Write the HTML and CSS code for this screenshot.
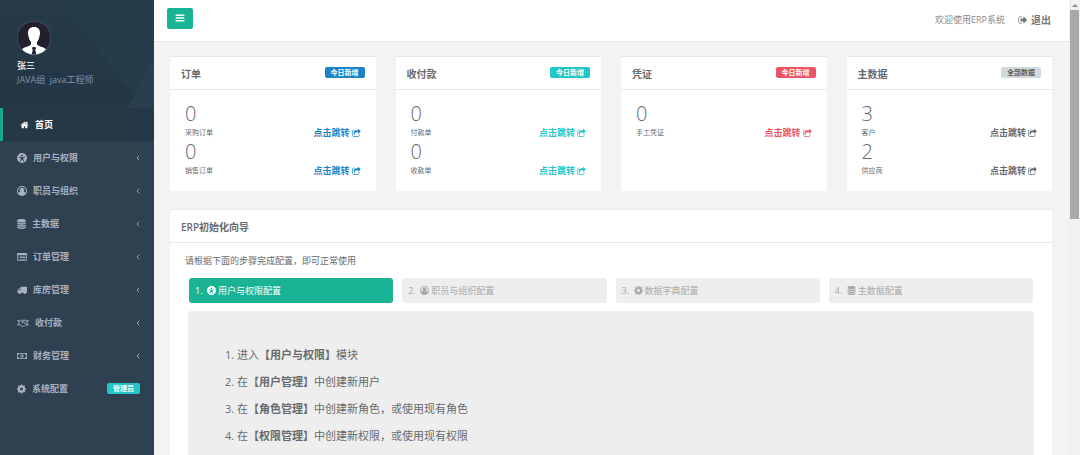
FILE: index.html
```html
<!DOCTYPE html>
<html lang="zh-CN">
<head>
<meta charset="utf-8">
<title>ERP系统</title>
<link rel="stylesheet" href="styles.css">
</head>
<body>
<svg class="sprite" aria-hidden="true">
  <symbol id="bars" viewBox="0 0 16 16"><path d="M1 2.5h14v2.4H1zM1 6.9h14v2.4H1zM1 11.3h14v2.4H1z"/></symbol>
  <symbol id="home" viewBox="0 0 1792 1792"><path d="M1472 992v480q0 26-19 45t-45 19h-384v-384h-256v384h-384q-26 0-45-19t-19-45v-480q0-1 .5-3t.5-3l575-474 575 474q1 2 1 6zm223-69l-62 74q-8 9-21 11h-3q-13 0-21-7l-692-577-692 577q-12 8-24 7-13-2-21-11l-62-74q-8-10-7-23.5t11-21.5l719-599q32-26 76-26t76 26l244 204v-195q0-14 9-23t23-9h192q14 0 23 9t9 23v408l219 182q10 8 11 21.5t-7 23.5z"/></symbol>
  <symbol id="access" viewBox="0 0 16 16"><path fill-rule="evenodd" d="M8 0a8 8 0 1 0 0 16A8 8 0 0 0 8 0zM8 2.6a1.5 1.5 0 1 1 0 3 1.5 1.5 0 0 1 0-3zM3.4 5.6l3 1h3.2l3-1 .3 1-2.9 1.3v2l1.5 3.6-1.1.5L8.5 10.600h-1L5.600 14l-1.100-.5L6 9.900v-2L3.100 6.600z"/></symbol>
  <symbol id="user" viewBox="0 0 16 16"><path fill-rule="evenodd" d="M8 0a8 8 0 1 0 0 16A8 8 0 0 0 8 0zm0 1.500a6.500 6.500 0 0 1 5.600 9.800c-.5-1.300-1.400-2.100-2.700-2.200a3.800 3.800 0 1 0-5.800 0c-1.300.1-2.200.9-2.700 2.200A6.500 6.500 0 0 1 8 1.500z"/></symbol>
  <symbol id="database" viewBox="0 0 14 16"><path d="M7 0c3.900 0 7 1 7 2.300v1.200c0 1.200-3.100 2.200-7 2.200S0 4.700 0 3.500V2.300C0 1 3.100 0 7 0zM0 5.200c1.500 1 4.100 1.500 7 1.500s5.500-.5 7-1.500v1.700c0 1.200-3.100 2.200-7 2.200S0 8.100 0 6.900zM0 8.600c1.500 1 4.100 1.500 7 1.500s5.500-.5 7-1.500v1.700c0 1.200-3.100 2.200-7 2.200s-7-1-7-2.200zM0 12c1.500 1 4.100 1.500 7 1.500s5.500-.5 7-1.500v1.700C14 15 10.900 16 7 16s-7-1-7-2.300z"/></symbol>
  <symbol id="list" viewBox="0 0 18 16"><path fill-rule="evenodd" d="M1.500 1h15A1.500 1.500 0 0 1 18 2.500v11a1.500 1.500 0 0 1-1.500 1.500h-15A1.500 1.500 0 0 1 0 13.500v-11A1.500 1.500 0 0 1 1.500 1zM1.300 5v8.700h15.400V5zM2.500 6h1.700v1.300H2.500zM5.400 6h10v1.300h-10zM2.500 8.600h1.700v1.300H2.500zM5.400 8.600h10v1.300h-10zM2.500 11.200h1.700v1.300H2.500zM5.400 11.200h10v1.300h-10z"/></symbol>
  <symbol id="truck" viewBox="0 0 18 16"><path fill-rule="evenodd" d="M7 2h10.300q.7 0 .7.700v9.600q0 .700-1.600.700a2.300 2.300 0 0 1-4.600 0H7.400a2.300 2.300 0 0 1-4.600 0H1q-1 0-1-.7.900-.3.900-.9V8.200q0-.4.300-.7L3.900 4.800q.4-.4 1-.4H6.400V2.700Q6.400 2 7 2zM2.300 8.500h4.100V5.700H4.900z"/></symbol>
  <symbol id="handshake" viewBox="0 0 22 16"><path fill="none" stroke="currentColor" stroke-width="1.700" stroke-linejoin="round" stroke-linecap="round" d="M1 4h2.500v7.500H1M21 4h-2.500v7.500H21M3.500 4.500L7 2.800h3l1.500.8M3.500 11h1.500l4.500 3.300q1.500.7 2.500-.3l1.500-.2 1.200-1.300 1.300-.3.900-1.200h1.600M18.500 4.500L15 2.800h-2.500L8.300 6.400q.8 1.500 2.700.6l1.500-1.100 4.200 4.800"/></symbol>
  <symbol id="money" viewBox="0 0 20 16"><path fill-rule="evenodd" d="M0 2h20v12H0zM4 3.400A2.600 2.600 0 0 1 1.400 6v4A2.600 2.600 0 0 1 4 12.600h12a2.600 2.600 0 0 1 2.600-2.600V6A2.600 2.600 0 0 1 16 3.400zM10 4.300c1.800 0 3 1.600 3 3.700s-1.200 3.700-3 3.700S7 10.100 7 8s1.200-3.700 3-3.700zM9.600 5.800L8.300 7l.6.700.6-.4v2H8.500v.9h3v-.9h-1V5.800z"/></symbol>
  <symbol id="cog" viewBox="128 128 1536 1536"><path d="M1152 896q0-106-75-181t-181-75-181 75-75 181 75 181 181 75 181-75 75-181zm512-109v222q0 12-8 23t-20 13l-185 28q-19 54-39 91 35 50 107 138 10 12 10 25t-9 23q-27 37-99 108t-94 71q-12 0-26-9l-138-108q-44 23-91 38-16 136-29 186-7 28-36 28h-222q-14 0-24.500-8.500t-11.500-21.500l-28-184q-49-16-90-37l-141 107q-10 9-25 9-14 0-25-11-126-114-165-168-7-10-7-23 0-12 8-23 15-21 51-66.500t54-70.500q-27-50-41-99l-183-27q-13-2-21-12.500t-8-23.500v-222q0-12 8-23t19-13l186-28q14-46 39-92-40-57-107-138-10-12-10-24 0-10 9-23 26-36 98.500-107.500t94.500-71.500q13 0 26 10l138 107q44-23 91-38 16-136 29-186 7-28 36-28h222q14 0 24.500 8.500t11.500 21.500l28 184q49 16 90 37l142-107q9-9 24-9 13 0 25 10 129 119 165 170 7 8 7 22 0 12-8 23-15 21-51 66.500t-54 70.500q26 50 41 98l183 28q13 2 21 12.500t8 23.500z"/></symbol>
  <symbol id="share" viewBox="0 0 1792 1792"><path d="M1472 989v259q0 119-84.500 203.500t-203.500 84.500h-832q-119 0-203.500-84.500t-84.500-203.500v-832q0-119 84.500-203.500t203.500-84.500h255q13 0 22.500 9.500t9.500 22.500q0 27-26 32-77 26-133 60-10 4-16 4h-112q-66 0-113 47t-47 113v832q0 66 47 113t113 47h832q66 0 113-47t47-113v-214q0-19 18-29 28-13 54-37 16-16 35-8 21 9 21 29zm237-496l-384 384q-18 19-45 19-12 0-25-5-39-17-39-59v-192h-160q-323 0-438 131-119 137-74 473 3 23-20 34-8 2-12 2-16 0-26-13-10-14-21-31t-39.500-68.500-49.500-99.500-38.500-114-17.500-122q0-49 3.500-91t14-90 28-88 47-81.500 68.500-74 94.500-61.500 124.500-48.500 159.500-30.500 196.500-11h160v-192q0-42 39-59 13-5 25-5 26 0 45 19l384 384q19 19 19 45t-19 45z"/></symbol>
  <symbol id="exit" viewBox="0 0 1792 1792"><path d="M704 1440q0 4 1 20t.5 26.500-3 23.500-10 19.500-20.500 6.500h-320q-119 0-203.500-84.500t-84.500-203.500v-704q0-119 84.500-203.500t203.500-84.500h320q13 0 22.500 9.500t9.500 22.500q0 4 1 20t.5 26.500-3 23.500-10 19.500-20.500 6.500h-320q-66 0-113 47t-47 113v704q0 66 47 113t113 47h312l11.500 1 11.500 3 8 5.500 7 9 2 13.500zm928-544q0 26-19 45l-544 544q-19 19-45 19t-45-19-19-45v-288h-448q-26 0-45-19t-19-45v-384q0-26 19-45t45-19h448v-288q0-26 19-45t45-19 45 19l544 544q19 19 19 45z"/></symbol>
  <symbol id="angle" viewBox="0 0 8 12"><path fill="none" stroke="currentColor" stroke-width="1.800" d="M6.500 1.500L2 6l4.500 4.500"/></symbol>
</svg>

<div class="app">
  <aside class="sidebar">
    <div class="profile">
      <svg class="avatar" viewBox="0 0 34 34" role="img" aria-label="头像">
        <defs><clipPath id="round"><circle cx="17" cy="17" r="16.500"/></clipPath></defs>
        <circle cx="17" cy="17" r="17" fill="#5b6570"/>
        <g clip-path="url(#round)">
          <path fill="#221f2e" d="M0 0h34v34H0z"/>
          <path fill="#fff" d="M17 6c4 0 6.300 2.700 6 6.500-.1 1.300-.2 2-.6 2.800-.3 3-1.400 4.700-2.400 5.700v2.300c1 2 5.500 2.500 8 4.200 1.500 1 2 3.500 2 6.500H4c0-3 .5-5.500 2-6.500 2.500-1.700 7-2.200 8-4.200V21c-1-1-2.100-2.700-2.400-5.700-.4-.8-.5-1.500-.6-2.800C10.700 8.700 13 6 17 6z"/>
          <path fill="#221f2e" d="M15.600 26h2.800l.6 1.500-.8 1.300 1.300 5.200h-5l1.300-5.200-.8-1.300z"/>
        </g>
      </svg>
      <strong class="profile-name">张三</strong>
      <span class="profile-role">JAVA组&nbsp; java工程师</span>
    </div>
    <nav class="menu">
      <a class="menu-item active" href="#"><svg class="icon narrow"><use href="#home"/></svg><span>首页</span></a>
      <a class="menu-item" href="#"><svg class="icon"><use href="#access"/></svg><span>用户与权限</span><svg class="arrow"><use href="#angle"/></svg></a>
      <a class="menu-item" href="#"><svg class="icon"><use href="#user"/></svg><span>职员与组织</span><svg class="arrow"><use href="#angle"/></svg></a>
      <a class="menu-item" href="#"><svg class="icon narrow"><use href="#database"/></svg><span>主数据</span><svg class="arrow"><use href="#angle"/></svg></a>
      <a class="menu-item" href="#"><svg class="icon"><use href="#list"/></svg><span>订单管理</span><svg class="arrow"><use href="#angle"/></svg></a>
      <a class="menu-item" href="#"><svg class="icon"><use href="#truck"/></svg><span>库房管理</span><svg class="arrow"><use href="#angle"/></svg></a>
      <a class="menu-item" href="#"><svg class="icon wide"><use href="#handshake"/></svg><span>收付款</span><svg class="arrow"><use href="#angle"/></svg></a>
      <a class="menu-item" href="#"><svg class="icon"><use href="#money"/></svg><span>财务管理</span><svg class="arrow"><use href="#angle"/></svg></a>
      <a class="menu-item" href="#"><svg class="icon narrow"><use href="#cog"/></svg><span>系统配置</span><span class="badge teal menu-badge">管理员</span></a>
    </nav>
  </aside>

  <div class="page">
    <header class="topbar">
      <button class="toggle" type="button" aria-label="菜单"><svg class="icon"><use href="#bars"/></svg></button>
      <span class="welcome">欢迎使用ERP系统</span>
      <a class="logout" href="#"><svg class="icon"><use href="#exit"/></svg>退出</a>
    </header>

    <main class="content">
      <div class="cards">
        <section class="card">
          <header class="card-head"><h2>订单</h2><span class="badge blue">今日新增</span></header>
          <div class="card-body">
            <div class="stat"><div><div class="number">0</div><div class="label">采购订单</div></div><a class="jump blue-text" href="#">点击跳转<svg class="icon"><use href="#share"/></svg></a></div>
            <div class="stat"><div><div class="number">0</div><div class="label">销售订单</div></div><a class="jump blue-text" href="#">点击跳转<svg class="icon"><use href="#share"/></svg></a></div>
          </div>
        </section>
        <section class="card">
          <header class="card-head"><h2>收付款</h2><span class="badge teal">今日新增</span></header>
          <div class="card-body">
            <div class="stat"><div><div class="number">0</div><div class="label">付款单</div></div><a class="jump teal-text" href="#">点击跳转<svg class="icon"><use href="#share"/></svg></a></div>
            <div class="stat"><div><div class="number">0</div><div class="label">收款单</div></div><a class="jump teal-text" href="#">点击跳转<svg class="icon"><use href="#share"/></svg></a></div>
          </div>
        </section>
        <section class="card">
          <header class="card-head"><h2>凭证</h2><span class="badge red">今日新增</span></header>
          <div class="card-body">
            <div class="stat"><div><div class="number">0</div><div class="label">手工凭证</div></div><a class="jump red-text" href="#">点击跳转<svg class="icon"><use href="#share"/></svg></a></div>
          </div>
        </section>
        <section class="card">
          <header class="card-head"><h2>主数据</h2><span class="badge gray">全部数据</span></header>
          <div class="card-body">
            <div class="stat"><div><div class="number">3</div><div class="label">客户</div></div><a class="jump" href="#">点击跳转<svg class="icon"><use href="#share"/></svg></a></div>
            <div class="stat"><div><div class="number">2</div><div class="label">供应商</div></div><a class="jump" href="#">点击跳转<svg class="icon"><use href="#share"/></svg></a></div>
          </div>
        </section>
      </div>

      <section class="card">
        <header class="card-head"><h2>ERP初始化向导</h2></header>
        <div class="wizard">
          <p class="hint">请根据下面的步骤完成配置，即可正常使用</p>
          <nav class="steps">
            <a class="step current" href="#"><span class="step-no">1.</span><svg class="icon"><use href="#access"/></svg>用户与权限配置</a>
            <a class="step" href="#"><span class="step-no">2.</span><svg class="icon"><use href="#user"/></svg>职员与组织配置</a>
            <a class="step" href="#"><span class="step-no">3.</span><svg class="icon"><use href="#cog"/></svg>数据字典配置</a>
            <a class="step" href="#"><span class="step-no">4.</span><svg class="icon"><use href="#database"/></svg>主数据配置</a>
          </nav>
          <div class="panel">
            <ol>
              <li>进入<b>【用户与权限】</b>模块</li>
              <li>在<b>【用户管理】</b>中创建新用户</li>
              <li>在<b>【角色管理】</b>中创建新角色，或使用现有角色</li>
              <li>在<b>【权限管理】</b>中创建新权限，或使用现有权限</li>
            </ol>
          </div>
        </div>
      </section>
    </main>
  </div>

  <div class="scrollbar" aria-hidden="true"><span class="scroll-up"></span><span class="scroll-thumb"></span></div>
</div>
</body>
</html>
```
FILE: styles.css
```css
* {
  box-sizing: border-box;
}

body {
  margin: 0;
  background: #f3f3f4;
  color: #676a6c;
  font: 9px/14px "Open Sans", "Noto Sans CJK SC", sans-serif;
}

a {
  color: inherit;
  text-decoration: none;
}

h2,
p,
ol {
  margin: 0;
}

.sprite {
  display: none;
}

.icon {
  width: 10px;
  height: 10px;
  flex: none;
  fill: currentColor;
}

.app {
  display: flex;
  height: 100vh;
  overflow: hidden;
}

/* Sidebar */
.sidebar {
  flex: none;
  width: 154px;
  background: #2f4050;
}

.profile {
  display: flex;
  flex-direction: column;
  align-items: flex-start;
  height: 108px;
  padding: 21px 17px 0;
  background:
    linear-gradient(300deg, #2a3f4e 12%, #2a3f4e00 13%),
    linear-gradient(52deg, #22364500 60%, #273c4b 61%),
    linear-gradient(#263a49, #233645);
}

.avatar {
  width: 34px;
  height: 34px;
  margin-bottom: 4px;
}

.profile-name {
  color: #dfe4ed;
}

.profile-role {
  color: #8095a8;
}

.menu-item {
  display: flex;
  align-items: center;
  gap: 6px;
  height: 33px;
  padding: 0 14px 0 17px;
  color: #a7b1c2;
  font-weight: 600;
}

.menu-item.active {
  border-left: 3px solid #19aa8d;
  background: #263745;
  color: #fff;
}

.menu .narrow {
  width: 9px;
}

.menu .wide {
  width: 12px;
}

.arrow {
  width: 4px;
  height: 6px;
  margin-left: auto;
}

.menu-badge {
  margin-left: auto;
}

/* Labels */
.badge {
  padding: 0 6px;
  border-radius: 2px;
  color: #fff;
  font-size: 7px;
  font-weight: 600;
  line-height: 11px;
}

.blue {
  background: #1c84c6;
}

.teal {
  background: #23c6c8;
}

.red {
  background: #ed5565;
}

.gray {
  background: #d1dade;
  color: #5e5e5e;
}

.blue-text {
  color: #1c84c6;
}

.teal-text {
  color: #23c6c8;
}

.red-text {
  color: #ed5565;
}

/* Top bar */
.page {
  flex: 1;
  min-width: 0;
}

.topbar {
  display: flex;
  align-items: center;
  height: 42px;
  padding: 0 18px 2px 13px;
  border-bottom: 1px solid #e7eaec;
  background: #fff;
}

.toggle {
  display: flex;
  align-items: center;
  justify-content: center;
  width: 26px;
  height: 21px;
  margin-bottom: 3px;
  padding: 0;
  border: 0;
  border-radius: 2px;
  background: #1ab394;
  color: #fff;
}

.welcome {
  margin-left: auto;
  color: #888;
}

.logout {
  display: flex;
  align-items: center;
  gap: 3px;
  margin-left: 13px;
  color: #777;
  font-size: 10px;
  font-weight: 600;
}

/* Cards */
.content {
  display: grid;
  gap: 18px;
  padding: 14px 17px 0 16px;
}

.cards {
  display: grid;
  grid-template-columns: repeat(4, 1fr);
  gap: 20px;
}

.card {
  border-top: 1px solid #e7eaec;
  background: #fff;
}

.card-head {
  display: flex;
  align-items: center;
  justify-content: space-between;
  height: 33px;
  padding: 2px 11px 0;
  border-bottom: 1px solid #e7eaec;
}

.card-head h2 {
  font-size: 10px;
  font-weight: 600;
}

.card-head .badge {
  margin-bottom: 4px;
}

.card-body {
  padding: 12px 15px 13px;
}

.stat {
  display: flex;
  align-items: flex-end;
  justify-content: space-between;
}

.number {
  font-size: 20px;
  font-weight: 300;
  line-height: 24px;
}

.label {
  font-size: 7px;
}

.jump {
  display: flex;
  align-items: center;
  gap: 2px;
  font-weight: 600;
}

.jump .icon {
  width: 9px;
  height: 9px;
}

/* Setup wizard */
.wizard {
  padding: 10px 18px 0;
}

.hint {
  margin: 0 -3px 10px;
  line-height: 15px;
}

.steps {
  display: grid;
  grid-template-columns: repeat(4, 1fr);
  gap: 9px;
  margin-bottom: 8px;
  padding: 0 1px;
}

.step {
  display: flex;
  align-items: center;
  gap: 2px;
  height: 25px;
  padding: 0 6px;
  border-radius: 3px;
  background: #eee;
  color: #aaa;
}

.step .icon {
  width: 9px;
  height: 9px;
}

.step-no {
  width: 10px;
}

.step.current {
  background: #1ab394;
  color: #fff;
}

.panel {
  min-height: 200px;
  padding: 30px 37px;
  border-radius: 3px;
  background: #eee;
}

.panel ol {
  padding-left: 12px;
  font-size: 11px;
  line-height: 27px;
}

/* Scroll bar */
.scrollbar {
  display: flex;
  flex: none;
  flex-direction: column;
  align-items: center;
  width: 11px;
  background: #f1f1f1;
}

.scroll-up {
  margin: 4px 0 3px;
  border: 3px solid transparent;
  border-top: 0;
  border-bottom-color: #8a8a8a;
}

.scroll-thumb {
  width: 9px;
  height: 46vh;
  background: #a8a8a8;
}
```
